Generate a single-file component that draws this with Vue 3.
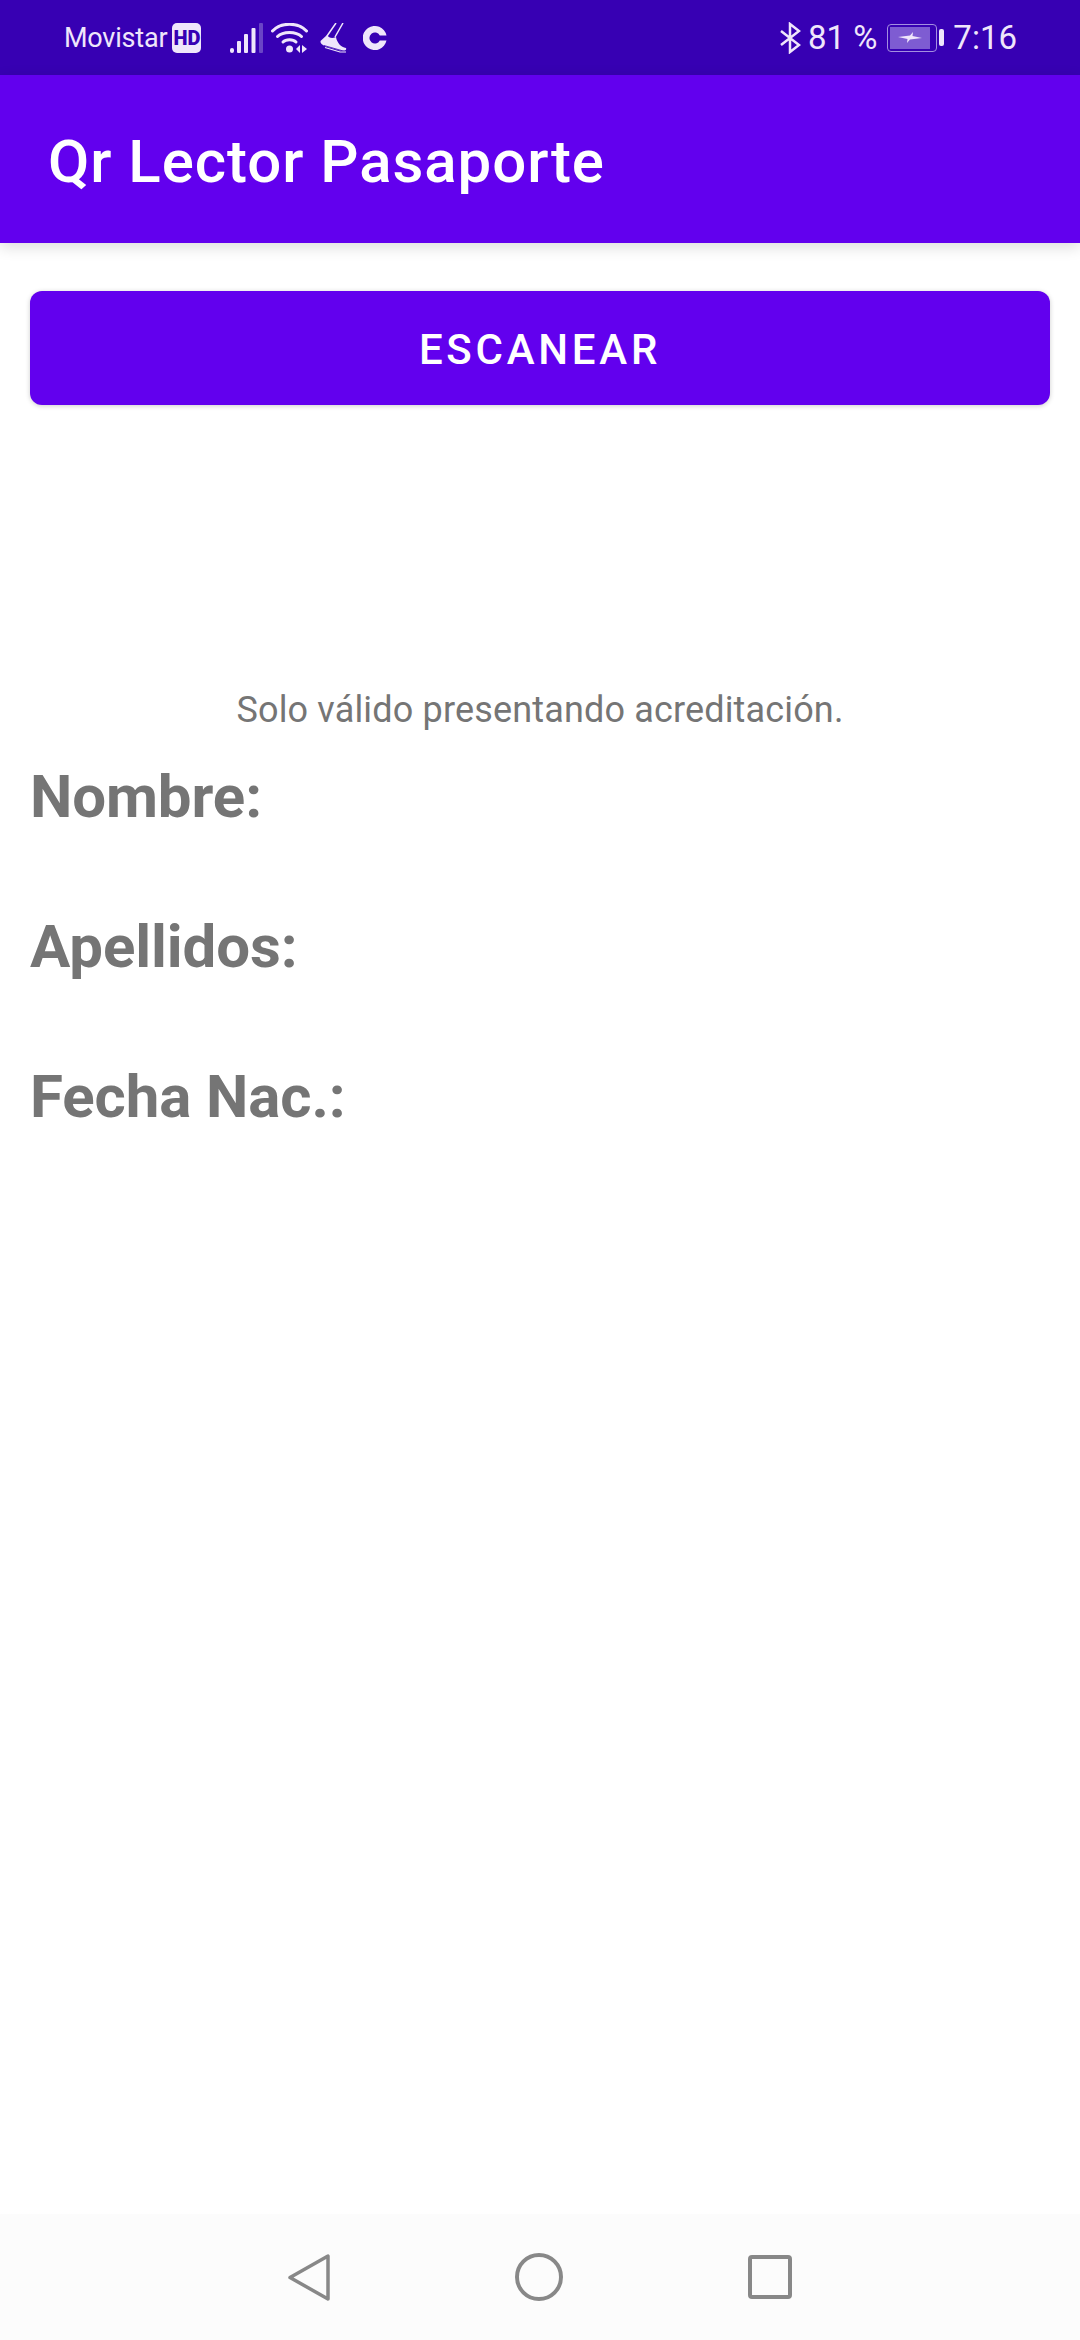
<script setup>
const fields = ['Nombre:', 'Apellidos:', 'Fecha Nac.:']
</script>

<template>
  <div class="screen">
    <div class="status">
      <div class="status-left">
        <span class="carrier">Movistar</span>
        <span class="hd">HD</span>
        <svg class="signal" width="33" height="30" viewBox="0 0 33 30">
          <rect x="0" y="25" width="4" height="5" rx="2" fill="#efe6fb" />
          <rect x="7" y="18" width="4" height="12" rx="1" fill="#efe6fb" />
          <rect x="14" y="11" width="4" height="19" rx="1" fill="#efe6fb" />
          <rect x="21.500" y="5" width="4" height="25" rx="1" fill="#efe6fb" />
          <rect x="29" y="0" width="4" height="30" rx="1" fill="#6a45c6" />
        </svg>
        <svg class="wifi" width="37" height="30" viewBox="0 0 37 30">
          <path d="M1.500 8 C10 -1 27 -1 35.500 8" fill="none" stroke="#efe6fb" stroke-width="3" stroke-linecap="round" />
          <path d="M6.500 13.500 C12 8 25 8 30.500 13.500" fill="none" stroke="#efe6fb" stroke-width="3" stroke-linecap="round" />
          <path d="M12 19 C15 16 22 16 25 19" fill="none" stroke="#efe6fb" stroke-width="3" stroke-linecap="round" />
          <circle cx="18.500" cy="26" r="3.500" fill="#efe6fb" />
          <path d="M29 22 V30 L25 26 Z M31 22 V30 L36 26 Z" fill="#efe6fb" />
        </svg>
        <svg class="shoe" width="27" height="30" viewBox="0 0 27 30">
          <path d="M16 0 L7 13 M23 0 L15 14" fill="none" stroke="#efe6fb" stroke-width="1.500" />
          <path d="M7 12 L0.500 18 C0 20 2 22 6 23.500 L20 27.500 C25 28.500 27 27 26 25 C21 24 17 20 16 14 C12 16 9 15 7 12 Z" fill="#efe6fb" />
          <path d="M4 22.500 L25 28.500" stroke="#3700b3" stroke-width="0.800" />
          <path d="M5 24.500 L20 29 L26 29" fill="none" stroke="#efe6fb" stroke-width="1.200" />
        </svg>
        <svg class="ring" width="24" height="24" viewBox="0 0 24 24">
          <path d="M23.500 9.500 A12 12 0 1 0 23.500 14.500 L16.800 14.500 A5.500 5.500 0 1 1 16.800 9.500 Z" fill="#efe6fb" />
        </svg>
      </div>
      <div class="status-right">
        <svg class="bt" width="22" height="32" viewBox="0 0 22 32">
          <path d="M2 9 L20 23 L11 30 V2 L20 9 L2 23" fill="none" stroke="#efe6fb" stroke-width="2.500" />
        </svg>
        <span class="pct">81 %</span>
        <div class="battery">
          <div class="battery-body">
            <div class="battery-fill">
              <svg width="24" height="11" viewBox="0 0 24 11">
                <path d="M0 5 L12 3.500 L15 0 L14.500 4 L24 6 L12 7.500 L9 11 L9.500 7 Z" fill="#efe6fb" />
              </svg>
            </div>
          </div>
          <div class="battery-tip"></div>
        </div>
        <span class="time">7:16</span>
      </div>
    </div>

    <header class="appbar">Qr Lector Pasaporte</header>

    <main class="content">
      <button class="scan">ESCANEAR</button>
      <p class="note">Solo válido presentando acreditación.</p>
      <div class="fields">
        <div v-for="f in fields" :key="f" class="field">{{ f }}</div>
      </div>
    </main>

    <nav class="navbar">
      <svg width="42" height="47" viewBox="0 0 42 47">
        <path d="M40 2 V45 L2 23.500 Z" fill="none" stroke="#888" stroke-width="3.500" stroke-linejoin="round" />
      </svg>
      <svg width="48" height="48" viewBox="0 0 48 48">
        <circle cx="24" cy="24" r="22" fill="none" stroke="#888" stroke-width="4" />
      </svg>
      <svg width="44" height="44" viewBox="0 0 44 44">
        <rect x="2" y="2" width="40" height="40" rx="2" fill="none" stroke="#888" stroke-width="4" />
      </svg>
    </nav>
  </div>
</template>

<style>
html, body { margin: 0; background: #fff; }
</style>

<style scoped>
.screen {
  width: 1080px;
  height: 2340px;
  display: flex;
  flex-direction: column;
  background: #fff;
  font-family: Roboto, "Liberation Sans", sans-serif;
  overflow: hidden;
}
.status {
  height: 75px;
  flex: none;
  background: #3700b3;
  color: #efe6fb;
  display: flex;
  align-items: center;
  justify-content: space-between;
  padding: 0 63px 0 64px;
  box-sizing: border-box;
}
.status-left, .status-right { display: flex; align-items: center; }
.carrier { font-size: 27px; letter-spacing: -0.200px; }
.hd {
  width: 29px;
  height: 30px;
  margin-left: 5px;
  border-radius: 5px;
  background: #efe6fb;
  color: #3700b3;
  font-size: 20px;
  font-weight: 900;
  line-height: 30px;
  text-align: center;
}
.signal { margin-left: 29px; }
.wifi { margin-left: 8px; }
.shoe { margin-left: 12px; }
.ring { margin-left: 16px; }
.pct { font-size: 33px; margin-left: 7px; }
.time { font-size: 33px; margin-left: 9px; }
.battery { display: flex; align-items: center; margin-left: 10px; }
.battery-body {
  width: 50px;
  height: 28px;
  box-sizing: border-box;
  border: 1.500px solid #a48fe0;
  border-radius: 4px;
  padding: 2px;
}
.battery-fill {
  width: 40px;
  height: 100%;
  background: #7e5cd2;
  display: flex;
  align-items: center;
  justify-content: center;
}
.battery-tip {
  width: 5px;
  height: 17px;
  margin-left: 2px;
  border-radius: 2px;
  background: #efe6fb;
}
.appbar {
  height: 168px;
  flex: none;
  box-sizing: border-box;
  padding-left: 48px;
  background: #6200ee;
  color: #fff;
  font-size: 60px;
  font-weight: 500;
  letter-spacing: 0.950px;
  line-height: 174px;
  box-shadow: 0 4px 14px rgba(0, 0, 0, 0.14);
  position: relative;
}
.content {
  flex: 1;
  padding: 48px 30px 0;
}
.scan {
  display: block;
  width: 100%;
  height: 114px;
  padding: 3px 0 0;
  border: none;
  border-radius: 12px;
  background: #6200ee;
  color: #fff;
  font-family: inherit;
  font-size: 42px;
  font-weight: 500;
  letter-spacing: 3.750px;
  box-shadow: 0 1px 5px rgba(0, 0, 0, 0.2);
}
.note {
  margin: 281px 0 0;
  color: #757575;
  font-size: 36px;
  letter-spacing: 0.160px;
  line-height: 48px;
  text-align: center;
}
.fields { margin-top: 28px; }
.field {
  height: 150px;
  color: #757575;
  font-size: 60px;
  font-weight: 700;
  letter-spacing: -0.100px;
  line-height: 70px;
}
.navbar {
  height: 126px;
  flex: none;
  background: #fcfcfc;
  display: flex;
  align-items: center;
  justify-content: center;
  gap: 185px;
}
</style>
